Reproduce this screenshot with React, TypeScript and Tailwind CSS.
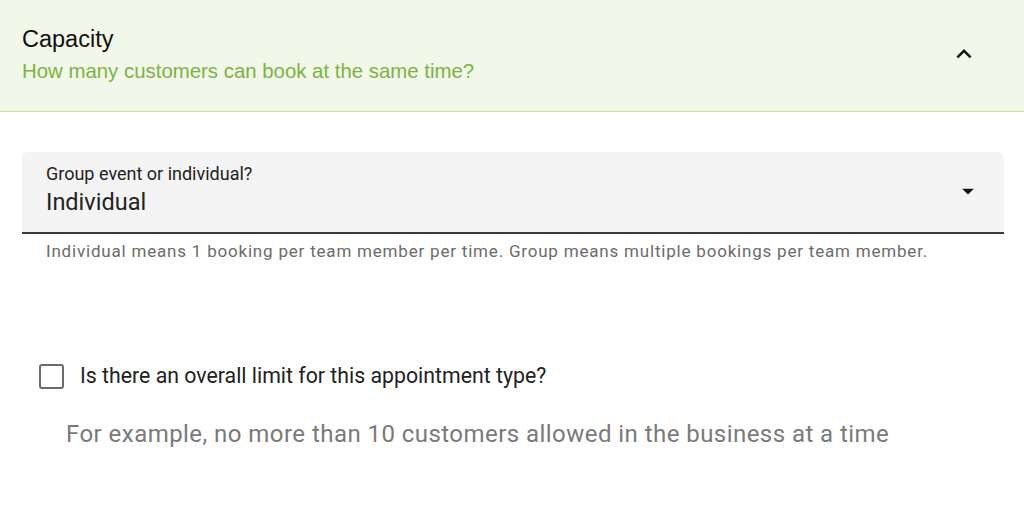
import React from 'react';

export default function App() {
  return (
    <div className="w-[1024px] h-[518px] bg-white overflow-hidden font-['Roboto']">
      <div className="h-[112px] bg-[#f1f8e9] border-b border-[#c5e1a5] flex items-center justify-between pl-[22px] pr-[45px]">
        <div className="flex flex-col gap-[5px] font-['Liberation_Sans'] mt-[-2px]">
          <div className="text-[23.5px] leading-[28px] text-[#111]">Capacity</div>
          <div className="text-[20.4px] leading-[26px] text-[#7cb342]">How many customers can book at the same time?</div>
        </div>
        <svg width="30" height="30" viewBox="0 0 24 24" className="mt-[-4px]">
          <path d="M7.41 15.41 12 10.83l4.59 4.58L18 14l-6-6-6 6z" fill="#111" />
        </svg>
      </div>

      <div className="pl-[22px] pr-[20px] pt-[40px]">
        <div className="h-[82px] bg-[#f4f4f4] rounded-t-[6px] border-b-2 border-[#3a3a3a] flex items-center justify-between pl-[24px] pr-[22px]">
          <div className="flex flex-col gap-[2px] mt-[-4px]">
            <div className="text-[18px] leading-[22px] text-[#222]">Group event or individual?</div>
            <div className="text-[23.5px] leading-[30px] text-[#222]">Individual</div>
          </div>
          <svg width="28" height="28" viewBox="0 0 24 24" className="mt-[-2px]">
            <path d="M7 10l5 5 5-5z" fill="#111" />
          </svg>
        </div>
        <div className="pl-[24px] pt-[6px] text-[17px] leading-[22px] text-[#6b6b6b] tracking-[0.8px]">
          Individual means 1 booking per team member per time. Group means multiple bookings per team member.
        </div>
      </div>

      <div className="pl-[39px] pt-[101px] flex items-center gap-[16px]">
        <div className="w-[25px] h-[25px] border-2 border-[#6b6b6b] rounded-[3px]" />
        <div className="text-[21.3px] leading-[26px] text-[#222]">Is there an overall limit for this appointment type?</div>
      </div>
      <div className="pl-[66px] pt-[30px] text-[24px] leading-[30px] text-[#7a7a7a] tracking-[0.45px]">
        For example, no more than 10 customers allowed in the business at a time
      </div>
    </div>
  );
}
